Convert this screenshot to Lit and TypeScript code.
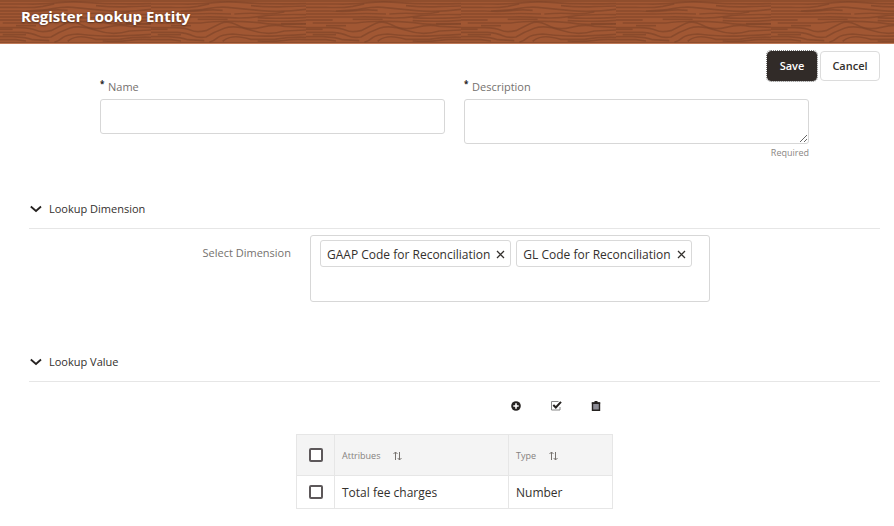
import { LitElement, html, css, svg } from "lit";
import { customElement, state } from "lit/decorators.js";

const grain = [
  "M0 3H465", "M0 12H90Q150 13 190 8T280 8T465 11",
  "M0 22H60Q110 24 140 19L175 12", "M90 33Q140 32 170 26T230 22Q270 26 330 32T465 28",
  "M0 33H70Q120 36 150 32T215 31", "M300 17Q350 22 400 20T465 18",
  "M0 42H120Q180 39 240 42", "M0 51H150Q200 50 240 53T330 49T465 44",
  "M320 53Q370 57 465 52", "M0 60H80", "M140 58H230", "M320 62Q400 66 465 61",
  "M20 69H150Q190 63 250 64T340 70T465 72",
  "M0 83H70Q105 84 120 91T165 92Q190 80 210 70T260 76T330 82T400 79L465 82",
  "M0 88H50", "M0 97H80Q110 100 125 107T165 111Q190 96 220 85T300 91T400 93L465 90",
  "M0 110H50Q90 112 110 119L160 122", "M20 104H90",
  "M175 127Q190 122 200 113T245 102Q280 106 320 108T465 103",
  "M215 124Q225 114 245 111T300 118H370Q420 110 465 112", "M0 119H60L90 123",
  "M320 123Q370 125 400 121T465 119", "M250 42Q300 38 330 41T400 36",
  "M390 71H465", "M60 77H120",
];

interface Column { name: string; wide: boolean }

@customElement("app-root")
export class AppRoot extends LitElement {
  static styles = css`
    :host { display: block; min-height: 100vh; background: #fff; color: #33302d; font-family: "Open Sans", "Noto Sans", sans-serif; font-size: 11px; line-height: 16px; }
    * { box-sizing: border-box; }
    button, input, textarea { font: inherit; color: inherit; }
    svg { display: block; }
    .banner { position: relative; height: 44px; padding: 3px 21px; background: #a15733; border-bottom: 1px solid #c07a58; }
    .wood { position: absolute; inset: 0; width: 100%; height: 100%; }
    h1 { position: relative; margin: 0; color: #fff; font-size: 15px; line-height: 26px; font-weight: 700; text-shadow: 0 1px 2px #0006; }
    .toolbar { display: flex; justify-content: flex-end; gap: 3px; padding: 7px 14px 0; }
    .btn { min-width: 60px; height: 30px; padding: 0 8px; border: 1px solid #dcdcdc; border-radius: 4px; background: #fff; font-weight: 600; }
    .save { min-width: 50px; border-color: #312b28; background: #312b28; color: #fff; outline: 1px dotted #777; }
    .form { display: grid; grid-template-columns: 1fr 1fr; gap: 19px; align-items: start; padding: 0 85px 0 100px; }
    .label { display: flex; height: 18px; gap: 4px; color: #75716e; line-height: 12px; }
    .label .star { width: 4px; color: #222; font-size: 8px; line-height: 6px; font-weight: 700; }
    .box { display: block; width: 100%; border: 1px solid #d7d7d7; border-radius: 3px; background: #fff; outline: none; }
    input.box { height: 35px; padding: 0 8px; }
    textarea.box { height: 45px; padding: 4px 8px; resize: vertical; }
    .hint { text-align: right; color: #8b8784; font-size: 9px; line-height: 18px; }
    .section { padding: 0 14px 0 29px; }
    .first { margin-top: 37px; }
    .second { margin-top: 50px; }
    .heading { display: flex; border-bottom: 1px solid #e6e6e6; height: 30px; align-items: flex-start; }
    h2 { margin: 0; font-size: 11px; line-height: 20px; font-weight: 400; }
    .toggle { display: flex; align-items: center; gap: 7px; padding: 0; border: 0; background: none; }
    .row { display: grid; grid-template-columns: 262fr 400fr 151fr; column-gap: 19px; padding-top: 6px; }
    .rowlabel { text-align: right; color: #75716e; font-weight: 500; padding-top: 10px; }
    .chips { display: flex; flex-wrap: wrap; align-content: flex-start; gap: 5px; min-height: 67px; margin: 0; padding: 4px 9px; border: 1px solid #d7d7d7; border-radius: 3px; list-style: none; }
    .chip { display: flex; align-items: center; gap: 6px; height: 27px; padding: 2px 5px 0 6px; border: 1px solid #d9d9d9; border-radius: 3px; font-size: 12px; }
    .icon { display: block; padding: 0; border: 0; background: none; }
    .tools { display: flex; justify-content: center; gap: 28px; padding: 18px 0 22px 202px; }
    table { width: 37%; min-width: 317px; margin: 0 auto; border-collapse: collapse; table-layout: fixed; }
    th, td { height: 33px; padding: 0 7px; border: 1px solid #e6e6e6; text-align: left; font-weight: 400; }
    td { font-size: 12px; padding-top: 1px; border-top: 0; }
    thead { background: #f4f4f4; color: #85817e; }
    th { height: 41px; padding-top: 2px; font-size: 9px; }
    .pick { width: 38px; padding: 0 12px; }
    .wide { width: 174px; }
    .sort { display: flex; align-items: center; gap: 13px; }
    .check { display: block; appearance: none; width: 14px; height: 14px; margin: 0; border: 2px solid #5d585a; border-radius: 2px; background: #fff; }
    .check:checked { background: #55504e; }
  `;

  @state() private dimensions = ["GAAP Code for Reconciliation", "GL Code for Reconciliation"];

  private columns: Column[] = [{ name: "Attribues", wide: true }, { name: "Type", wide: false }];

  private remove(name: string) {
    this.dimensions = this.dimensions.filter((d) => d !== name);
  }

  private heading(text: string) {
    return html`<div class="heading"><h2><button class="toggle" aria-expanded="true">
      <svg width="13" height="10" viewBox="0 0 13 10" fill="none" stroke="#252220" stroke-width="1.8"><path d="M1.8 2.5L7 7l5-4.5"/></svg>
      ${text}</button></h2></div>`;
  }

  render() {
    return html`
      <header class="banner">
        <svg class="wood" aria-hidden="true">
          <defs><pattern id="grain" x="-4" width="155" height="44" patternUnits="userSpaceOnUse">
            <g transform="scale(.3333)" fill="none" stroke="#7c4226" stroke-width="5" stroke-opacity=".62">
              ${grain.map((d) => svg`<path d=${d}/>`)}
              <path d="M0 128H465" stroke-width="3"/>
            </g>
          </pattern></defs>
          <rect width="100%" height="100%" fill="url(#grain)"/>
        </svg>
        <h1>Register Lookup Entity</h1>
      </header>
      <main>
        <div class="toolbar"><button class="btn save">Save</button><button class="btn">Cancel</button></div>
        <div class="form">
          <div>
            <label class="label" for="name"><span class="star">*</span>Name</label>
            <input class="box" id="name" required>
          </div>
          <div>
            <label class="label" for="description"><span class="star">*</span>Description</label>
            <textarea class="box" id="description" required></textarea>
            <div class="hint">Required</div>
          </div>
        </div>
        <section class="section first">
          ${this.heading("Lookup Dimension")}
          <div class="row">
            <div class="rowlabel" id="dims">Select Dimension</div>
            <ul class="chips" aria-labelledby="dims">
              ${this.dimensions.map((d) => html`<li class="chip">${d}
                <button class="icon" aria-label="Remove ${d}" @click=${() => this.remove(d)}>
                  <svg width="9" height="9" viewBox="0 0 9 9" stroke="#33302d" stroke-width="1.3"><path d="M1 1l7 7M8 1L1 8"/></svg>
                </button></li>`)}
            </ul>
          </div>
        </section>
        <section class="section second">
          ${this.heading("Lookup Value")}
          <div class="tools">
            <button class="icon" aria-label="Add"><svg width="12" height="12" viewBox="0 0 12 12"><circle cx="6" cy="6" r="4.8" fill="#252220"/><path d="M6 3.3v5.4M3.3 6h5.4" stroke="#fff" stroke-width="1.6"/></svg></button>
            <button class="icon" aria-label="Edit"><svg width="12" height="12" viewBox="0 0 12 12" fill="none"><path d="M8.5 1.5h-7v8.5h8.5V7" stroke="#888" stroke-width="1"/><path d="M3.3 5l2.5 2.5L11 1.8" stroke="#252220" stroke-width="2"/></svg></button>
            <button class="icon" aria-label="Delete"><svg width="12" height="12" viewBox="0 0 12 12" fill="none"><path d="M2.5 3.2h7v7h-7z" fill="#8d8d96" stroke="#252220" stroke-width="1.4"/><path d="M1.8 3h8.4M4.5 1.8h3" stroke="#252220" stroke-width="1.4"/></svg></button>
          </div>
          <table>
            <thead><tr>
              <th class="pick"><input class="check" type="checkbox" aria-label="Select all"></th>
              ${this.columns.map((c) => html`<th class=${c.wide ? "wide" : ""}><div class="sort">${c.name}
                <button class="icon" aria-label="Sort by ${c.name}"><svg width="9" height="10" viewBox="0 0 9 10" fill="none" stroke="#77736f"><path d="M2.5 9V1M.5 3l2-2 2 2M6.5 1v8M4.7 7l1.8 2 2-2"/></svg></button></div></th>`)}
            </tr></thead>
            <tbody><tr>
              <td class="pick"><input class="check" type="checkbox" aria-label="Select Total fee charges"></td>
              <td>Total fee charges</td><td>Number</td>
            </tr></tbody>
          </table>
        </section>
      </main>`;
  }
}
